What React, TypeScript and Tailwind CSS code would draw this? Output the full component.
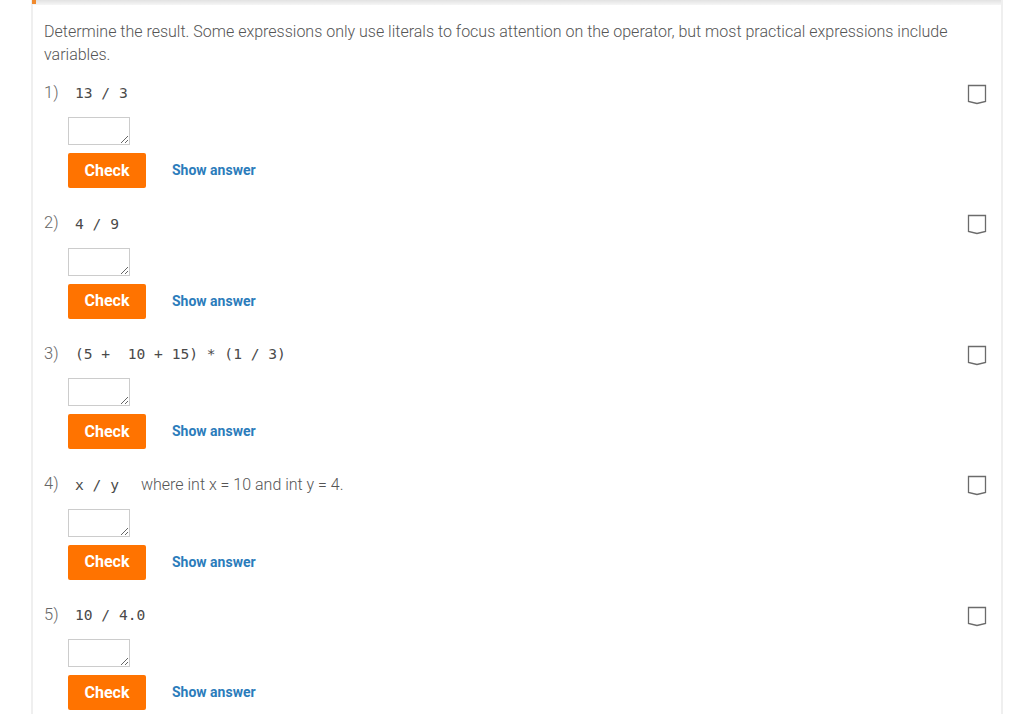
import React from 'react';

type Item = {
  n: number;
  code: string;
  note?: string;
};

const items: Item[] = [
  { n: 1, code: '13 / 3' },
  { n: 2, code: '4 / 9' },
  { n: 3, code: '(5 +  10 + 15) * (1 / 3)' },
  { n: 4, code: 'x / y', note: 'where int x = 10 and int y = 4.' },
  { n: 5, code: '10 / 4.0' },
];

function Chevron() {
  return (
    <svg width="20" height="21" viewBox="0 0 20 21" className="shrink-0">
      <path d="M1.5 1.5 H18.5 V17.5 L10 19.5 L1.5 17.5 Z" fill="white" stroke="#6b6b6b" strokeWidth="1.3" />
    </svg>
  );
}

function Question({ item }: { item: Item }) {
  return (
    <div className="pb-[23.5px]">
      <div className="flex h-6 items-center">
        <span className="w-[31px] text-[16.5px] font-light text-[#666]">{item.n})</span>
        <code className="whitespace-pre font-['DejaVu_Sans_Mono',monospace] text-[14.6px] text-[#4a4a4a]">{item.code}</code>
        {item.note && <span className="ml-[22px] text-[16px] font-light text-[#555]">{item.note}</span>}
        <div className="ml-auto mr-[14px] mt-[2px]">
          <Chevron />
        </div>
      </div>
      <div className="ml-[24px] mt-3 flex flex-col items-start">
        <textarea className="h-[28px] w-[62px] border border-[#ccc] bg-white" rows={1} />
        <div className="mt-2 flex items-center">
          <button className="h-[35px] w-[78px] rounded-[2px] bg-[#ff7300] text-[16px] font-bold text-white">Check</button>
          <button className="ml-[26px] text-[14px] font-bold text-[#2b7cbb]">Show answer</button>
        </div>
      </div>
    </div>
  );
}

export default function App() {
  return (
    <div className="min-h-screen bg-white font-['Roboto','Liberation_Sans',sans-serif]">
      <div className="ml-[31px] w-[972px] border-x-2 border-[#efefef]">
        <div className="relative h-[5px] bg-gradient-to-b from-[#e2e2e2] to-[#f6f6f6]">
          <div className="absolute left-[-1px] top-0 h-[4px] w-[4px] bg-[#f08a2e]" />
        </div>
        <div className="pl-[11px] pt-[15px]">
          <p className="pr-[30px] text-[16px] font-light leading-[23px] text-[#555]">
            Determine the result. Some expressions only use literals to focus attention on the operator, but most practical expressions include variables.
          </p>
          <div className="mt-[15px]">
            {items.map((it) => (
              <Question key={it.n} item={it} />
            ))}
          </div>
        </div>
      </div>
    </div>
  );
}
